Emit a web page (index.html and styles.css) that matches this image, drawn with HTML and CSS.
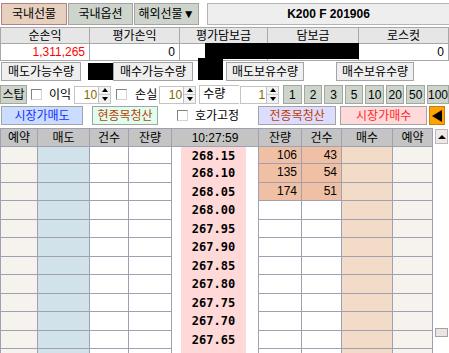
FILE: index.html
```html
<!DOCTYPE html>
<html lang="ko">
<head>
    <meta charset="UTF-8">
    <title>K200 주문</title>
    <link rel="stylesheet" href="styles.css">
</head>
<body>
<div class="page">
    <!-- Market tabs -->
    <div class="topbar">
        <div class="tab tab-on">국내선물</div>
        <div class="tab">국내옵션</div>
        <div class="tab">해외선물▼</div>
        <div class="title">K200 F 201906</div>
    </div>

    <!-- Account summary -->
    <div class="summary">
        <div class="sh">순손익</div>
        <div class="sh">평가손익</div>
        <div class="sh">평가담보금</div>
        <div class="sh">담보금</div>
        <div class="sh">로스컷</div>
        <div class="sv red">1,311,265</div>
        <div class="sv">0</div>
        <div class="sv"></div>
        <div class="sv"></div>
        <div class="sv">0</div>
    </div>

    <!-- Quantities -->
    <div class="qty-row">
        <div class="qlabel q1">매도가능수량</div>
        <div class="qbox w32"></div>
        <div class="qlabel q1">매수가능수량</div>
        <div class="qbox w33"></div>
        <div class="qlabel q2">매도보유수량</div>
        <div class="qbox w32"></div>
        <div class="qlabel q2">매수보유수량</div>
        <div class="qbox w35"></div>
    </div>

    <!-- Stop settings -->
    <div class="stop-row">
        <div class="btn-gray stop">스탑</div>
        <span class="check ck1"></span>
        <span class="txt t1">이익</span>
        <div class="spin s1"><span class="val">10</span><span class="arrows"><i class="up"></i><i class="down"></i></span></div>
        <span class="check ck2"></span>
        <span class="txt t2">손실</span>
        <div class="spin s2"><span class="val">10</span><span class="arrows"><i class="up"></i><i class="down"></i></span></div>
        <div class="qty-name">수량</div>
        <div class="spin s3"><span class="val">1</span><span class="arrows"><i class="up"></i><i class="down"></i></span></div>
        <div class="nums">
            <div class="btn-gray">1</div>
            <div class="btn-gray">2</div>
            <div class="btn-gray">3</div>
            <div class="btn-gray">5</div>
            <div class="btn-gray">10</div>
            <div class="btn-gray">20</div>
            <div class="btn-gray">50</div>
            <div class="btn-gray">100</div>
        </div>
    </div>

    <!-- Order buttons -->
    <div class="order-row">
        <div class="obtn sell-mkt">시장가매도</div>
        <div class="obtn clear-one">현종목청산</div>
        <span class="check ck3"></span>
        <span class="txt t3">호가고정</span>
        <div class="obtn clear-all">전종목청산</div>
        <div class="obtn buy-mkt">시장가매수</div>
        <div class="obtn arrow-btn"><i></i></div>
    </div>

    <!-- Order book -->
    <div class="book-wrap">
        <div class="book">
            <div class="c hd">예약</div><div class="c hd">매도</div><div class="c hd">건수</div><div class="c hd">잔량</div><div class="c hd time">10:27:59</div><div class="c hd">잔량</div><div class="c hd">건수</div><div class="c hd">매수</div><div class="c hd">예약</div>

            <div class="c rsv"></div><div class="c sell"></div><div class="c"></div><div class="c"></div><div class="c price"><span>268.15</span></div><div class="c hot">106</div><div class="c hot">43</div><div class="c buy"></div><div class="c rsv"></div>
            <div class="c rsv"></div><div class="c sell"></div><div class="c"></div><div class="c"></div><div class="c price"><span>268.10</span></div><div class="c hot">135</div><div class="c hot">54</div><div class="c buy"></div><div class="c rsv"></div>
            <div class="c rsv"></div><div class="c sell"></div><div class="c"></div><div class="c"></div><div class="c price"><span>268.05</span></div><div class="c hot">174</div><div class="c hot">51</div><div class="c buy"></div><div class="c rsv"></div>
            <div class="c rsv"></div><div class="c sell"></div><div class="c"></div><div class="c"></div><div class="c price"><span>268.00</span></div><div class="c"></div><div class="c"></div><div class="c buy"></div><div class="c rsv"></div>
            <div class="c rsv"></div><div class="c sell"></div><div class="c"></div><div class="c"></div><div class="c price"><span>267.95</span></div><div class="c"></div><div class="c"></div><div class="c buy"></div><div class="c rsv"></div>
            <div class="c rsv"></div><div class="c sell"></div><div class="c"></div><div class="c"></div><div class="c price"><span>267.90</span></div><div class="c"></div><div class="c"></div><div class="c buy"></div><div class="c rsv"></div>
            <div class="c rsv"></div><div class="c sell"></div><div class="c"></div><div class="c"></div><div class="c price"><span>267.85</span></div><div class="c"></div><div class="c"></div><div class="c buy"></div><div class="c rsv"></div>
            <div class="c rsv"></div><div class="c sell"></div><div class="c"></div><div class="c"></div><div class="c price"><span>267.80</span></div><div class="c"></div><div class="c"></div><div class="c buy"></div><div class="c rsv"></div>
            <div class="c rsv"></div><div class="c sell"></div><div class="c"></div><div class="c"></div><div class="c price"><span>267.75</span></div><div class="c"></div><div class="c"></div><div class="c buy"></div><div class="c rsv"></div>
            <div class="c rsv"></div><div class="c sell"></div><div class="c"></div><div class="c"></div><div class="c price"><span>267.70</span></div><div class="c"></div><div class="c"></div><div class="c buy"></div><div class="c rsv"></div>
            <div class="c rsv"></div><div class="c sell"></div><div class="c"></div><div class="c"></div><div class="c price"><span>267.65</span></div><div class="c"></div><div class="c"></div><div class="c buy"></div><div class="c rsv"></div>
            <div class="c rsv"></div><div class="c sell"></div><div class="c"></div><div class="c"></div><div class="c price"><span>267.60</span></div><div class="c"></div><div class="c"></div><div class="c buy"></div><div class="c rsv"></div>
        </div>
        <div class="scroll">
            <div class="sc-up"><i></i></div>
            <div class="sc-thumb"></div>
        </div>
    </div>

    <!-- Blacked-out values -->
    <div class="redact r1"></div>
    <div class="redact r2"></div>
    <div class="redact r3"></div>
</div>
</body>
</html>
```

FILE: styles.css
```css
/* Reset */
* {
    margin: 0;
    padding: 0;
    box-sizing: border-box;
}

body {
    font-family: "Liberation Sans", "Noto Sans CJK KR", sans-serif;
    font-size: 12px;
    color: #000;
    background: #fff;
    overflow: hidden;
}

.page {
    position: relative;
    width: 449px;
    height: 353px;
    overflow: hidden;
}

/* Top tabs */
.topbar {
    display: flex;
    height: 27px;
    padding-top: 3px;
}

.tab {
    width: 65px;
    height: 22px;
    margin-left: 1px;
    display: flex;
    align-items: center;
    justify-content: center;
    background: #ccd4cc;
    border: 1px solid #a4a4a4;
    line-height: 1;
}

.tab-on {
    width: 66px;
    background: #e8d0bf;
    border-color: #b08484;
}

.title {
    flex: 1;
    height: 22px;
    margin-left: 8px;
    display: flex;
    align-items: center;
    justify-content: center;
    background: #eeeeee;
    border: 1px solid #b4b4b4;
    border-right: none;
    font-weight: bold;
    line-height: 1;
}

/* Summary table */
.summary {
    display: grid;
    grid-template-columns: 89px 90px 88px 91px 90px;
    grid-template-rows: 16px 17px;
    border-top: 1px solid #a8a8a8;
    border-left: 1px solid #a8a8a8;
}

.sh,
.sv {
    border-right: 1px solid #a8a8a8;
    border-bottom: 1px solid #a8a8a8;
    line-height: 1;
    display: flex;
    align-items: center;
}

.sh {
    justify-content: center;
    background: #e6e6e6;
}

.sv {
    justify-content: flex-end;
    padding-right: 4px;
}

.red {
    color: #ff0000;
}

/* Quantity row */
.qty-row {
    display: flex;
    height: 19px;
    margin-top: 1px;
    padding-left: 1px;
}

.qlabel {
    display: flex;
    align-items: center;
    justify-content: center;
    background: #efefef;
    border: 1px solid #a4a4a4;
    line-height: 1;
}

.q1 { width: 80px; }
.q2 { width: 78px; }

.qbox { background: #fff; }
.w32 { width: 32px; }
.w33 { width: 33px; }
.w35 { width: 35px; }

/* Stop row */
.stop-row {
    display: flex;
    align-items: center;
    height: 19px;
    margin-top: 4px;
}

.btn-gray {
    display: flex;
    align-items: center;
    justify-content: center;
    height: 19px;
    background: #ccd4cc;
    border: 1px solid #a0a8a0;
    line-height: 1;
}

.stop { width: 27px; }

.check {
    width: 11px;
    height: 11px;
    background: #fff;
    border: 1px solid;
    border-color: #808080 #d4d4d4 #d4d4d4 #808080;
}

.ck1 { margin-left: 4px; }
.ck2 { margin-left: 5px; }
.ck3 { margin-left: 19px; }

.txt { line-height: 1; }
.t1 { margin-left: 7px; }
.t2 { margin-left: 8px; }
.t3 { margin-left: 7px; }

.spin {
    display: flex;
    height: 18px;
    background: #fff;
    border: 1px solid #c4c4c4;
}

.s1 { width: 37px; margin-left: 3px; }
.s2 { width: 37px; margin-left: 2px; }
.s3 { width: 39px; margin-left: 1px; }

.spin .val {
    flex: 1;
    text-align: right;
    padding-right: 1px;
    line-height: 16px;
    color: #7a6a00;
}

.arrows {
    width: 12px;
    display: flex;
    flex-direction: column;
    border-left: 1px solid #c0c0c0;
    background: #f2f2f2;
}

.arrows i {
    flex: 1;
    display: flex;
    align-items: center;
    justify-content: center;
}

.arrows i + i {
    border-top: 1px solid #c8c8c8;
}

.arrows .up::after {
    content: "";
    border-left: 3px solid transparent;
    border-right: 3px solid transparent;
    border-bottom: 4px solid #000;
}

.arrows .down::after {
    content: "";
    border-left: 3px solid transparent;
    border-right: 3px solid transparent;
    border-top: 4px solid #000;
}

.qty-name {
    width: 40px;
    height: 19px;
    margin-left: 3px;
    padding-left: 3px;
    border: 1px solid #c4c4c4;
    border-right: none;
    line-height: 17px;
}

.nums {
    flex: 1;
    display: flex;
    gap: 2px;
    margin-left: 4px;
}

.nums .btn-gray {
    flex: 1;
}

/* Order row */
.order-row {
    display: flex;
    align-items: center;
    height: 19px;
    margin-top: 2px;
}

.obtn {
    height: 19px;
    display: flex;
    align-items: center;
    justify-content: center;
    border: 1px solid #a4a4a4;
    line-height: 1;
}

.sell-mkt {
    width: 82px;
    margin-left: 1px;
    background: #cadcff;
    color: #1030ff;
}

.clear-one {
    width: 66px;
    margin-left: 9px;
    background: #defff0;
    color: #c04000;
}

.clear-all {
    width: 78px;
    margin-left: 19px;
    background: #dcdcff;
    color: #c04000;
}

.buy-mkt {
    width: 87px;
    margin-left: 4px;
    background: #ffdada;
    color: #ff2828;
}

.arrow-btn {
    width: 16px;
    margin-left: 2px;
    background: #ffa200;
    border-color: #c08020;
}

.arrow-btn i {
    border-top: 6px solid transparent;
    border-bottom: 6px solid transparent;
    border-right: 10px solid #000;
}

/* Order book */
.book-wrap {
    display: flex;
    margin-top: 3px;
}

.book {
    width: 433px;
    display: grid;
    grid-template-columns: 37px 52px 39px 43px 87px 43px 40px 51px 40px;
    grid-template-rows: 18px 17px;
    grid-auto-rows: 18.5px;
    border-top: 1px solid #a0a0b0;
    border-left: 1px solid #a0a0b0;
}

.c {
    border-right: 1px solid #a0a0b0;
    border-bottom: 1px solid #a0a0b0;
    background: #fff;
}

.hd {
    display: flex;
    align-items: center;
    justify-content: center;
    background: #c4c4c4;
    line-height: 1;
}

.rsv { background: #f6f3ef; }
.sell { background: #d2e2ea; }
.buy { background: #f2dcc8; }

.hot {
    background: #efc0a4;
    text-align: right;
    padding-right: 4px;
    line-height: 17px;
}

.price {
    border-bottom: none;
    padding: 0 12px 0 9px;
}

.price span {
    display: block;
    height: 100%;
    background: #ffd8d8;
    text-align: center;
    font-family: "DejaVu Sans Mono", monospace;
    font-weight: bold;
    font-size: 12px;
    line-height: 18px;
}

/* Scrollbar */
.scroll {
    width: 16px;
    padding: 1px 1px 0 2px;
}

.sc-up {
    height: 15px;
    display: flex;
    align-items: center;
    justify-content: center;
    background: #eee8e8;
    border: 1px solid #c0b8b8;
}

.sc-up i {
    border-left: 4px solid transparent;
    border-right: 4px solid transparent;
    border-bottom: 4px solid #000;
}

.sc-thumb {
    height: 9px;
    margin-top: 184px;
    background: #ece4e4;
    border: 1px solid #a8a0a0;
}

/* Redacted values */
.redact {
    position: absolute;
    background: #000;
}

.r1 { left: 205px; top: 43px; width: 154px; height: 16px; }
.r2 { left: 198px; top: 58px; width: 25px; height: 22px; }
.r3 { left: 88px; top: 63px; width: 25px; height: 17px; }
```
